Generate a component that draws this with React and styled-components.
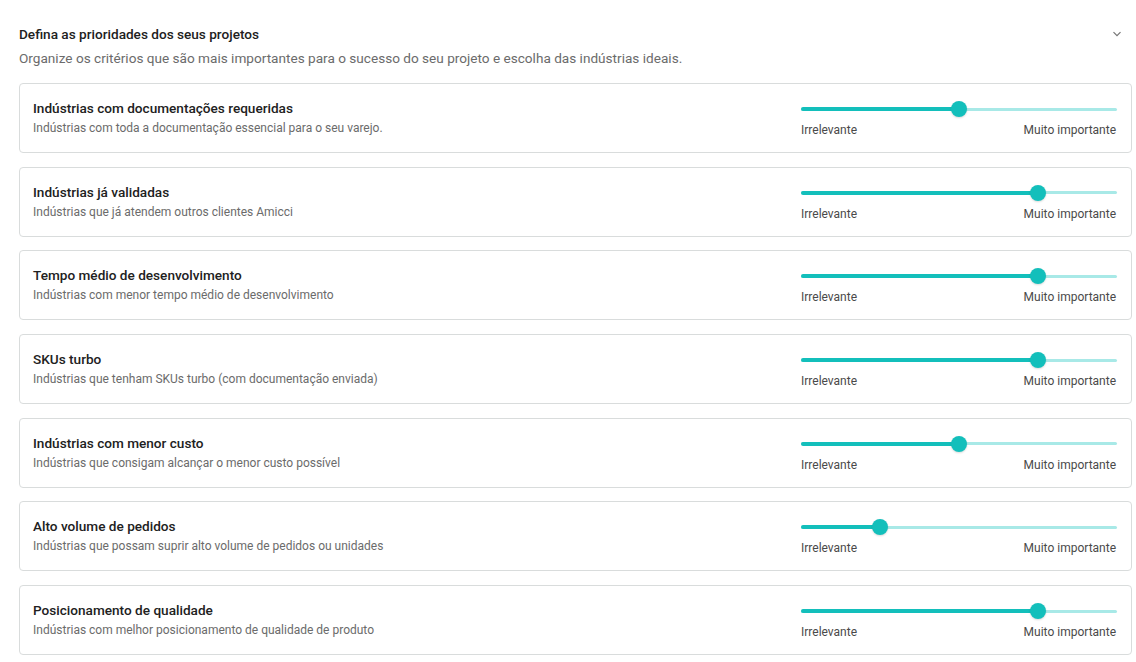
import React from "react";
import styled, { createGlobalStyle } from "styled-components";

const Global = createGlobalStyle`
  html, body { margin: 0; padding: 0; background: #ffffff; }
  body { font-family: Roboto, "Noto Sans", Arial, sans-serif; -webkit-font-smoothing: antialiased; }
  * { box-sizing: border-box; }
`;

const Panel = styled.section`
  width: 1136px;
  min-height: 662px;
  background: #fff;
  box-shadow: 0 -1px 3px rgba(0,0,0,0.08);
  padding: 24px 4px 0 19px;
`;

const HeaderRow = styled.div`
  display: flex;
  align-items: center;
  justify-content: space-between;
  padding-right: 10px;
  height: 20px;
`;

const Heading = styled.h2`
  margin: 0;
  font-size: 13.6px;
  font-weight: 500;
  color: #212121;
  line-height: 20px;
`;

const Chevron = styled.svg`
  width: 10px;
  height: 10px;
  color: #757575;
  margin-top: -1px;
`;

const Subtitle = styled.p`
  margin: 4px 0 15px;
  font-size: 13.6px;
  line-height: 20px;
  color: #6b6b6b;
`;

const List = styled.div`
  display: flex;
  flex-direction: column;
  gap: 13.7px;
`;

const Card = styled.div`
  display: flex;
  align-items: center;
  justify-content: space-between;
  height: 70px;
  border: 1px solid #d9dcdc;
  border-radius: 4px;
  padding: 0 14px 0 13px;
`;

const TextBlock = styled.div`
  display: flex;
  flex-direction: column;
  margin-top: 1px;
`;

const Title = styled.div`
  font-size: 13.6px;
  font-weight: 500;
  color: #212121;
  line-height: 19px;
`;

const Desc = styled.div`
  font-size: 12px;
  color: #6b6b6b;
  line-height: 19px;
  padding-top: 1px;
`;

const SliderBlock = styled.div`
  width: 316px;
  display: flex;
  flex-direction: column;
  gap: 11px;
  margin-top: 9px;
`;

const Rail = styled.div`
  position: relative;
  height: 4px;
  display: flex;
  align-items: center;
`;

const RailLine = styled.div`
  position: absolute;
  left: 0;
  right: 0;
  height: 3px;
  border-radius: 2px;
  background: #a8e9e7;
`;

const Track = styled.div`
  position: absolute;
  left: 0;
  height: 4px;
  border-radius: 2px;
  background: #13bfbb;
`;

const Thumb = styled.div`
  position: absolute;
  top: 50%;
  width: 16px;
  height: 16px;
  margin-left: -8px;
  margin-top: -8px;
  border-radius: 50%;
  background: #13bfbb;
  box-shadow: 0 1px 2px rgba(0,0,0,0.15);
`;

const Labels = styled.div`
  display: flex;
  justify-content: space-between;
  font-size: 12px;
  line-height: 16px;
  color: #4a4a4a;
  padding-right: 1px;
`;

const items = [
  { t: "Indústrias com documentações requeridas", d: "Indústrias com toda a documentação essencial para o seu varejo.", v: 50 },
  { t: "Indústrias já validadas", d: "Indústrias que já atendem outros clientes Amicci", v: 75 },
  { t: "Tempo médio de desenvolvimento", d: "Indústrias com menor tempo médio de desenvolvimento", v: 75 },
  { t: "SKUs turbo", d: "Indústrias que tenham SKUs turbo (com documentação enviada)", v: 75 },
  { t: "Indústrias com menor custo", d: "Indústrias que consigam alcançar o menor custo possível", v: 50 },
  { t: "Alto volume de pedidos", d: "Indústrias que possam suprir alto volume de pedidos ou unidades", v: 25 },
  { t: "Posicionamento de qualidade", d: "Indústrias com melhor posicionamento de qualidade de produto", v: 75 },
];

function Slider({ value }) {
  return (
    <SliderBlock>
      <Rail>
        <RailLine />
        <Track style={{ width: `${value}%` }} />
        <Thumb style={{ left: `${value}%` }} />
      </Rail>
      <Labels>
        <span>Irrelevante</span>
        <span>Muito importante</span>
      </Labels>
    </SliderBlock>
  );
}

export default function App() {
  return (
    <>
      <Global />
      <Panel>
        <HeaderRow>
          <Heading>Defina as prioridades dos seus projetos</Heading>
          <Chevron viewBox="0 0 10 10" fill="none">
            <path d="M1.5 3.2 L5 6.7 L8.5 3.2" stroke="currentColor" strokeWidth="1.2" />
          </Chevron>
        </HeaderRow>
        <Subtitle>
          Organize os critérios que são mais importantes para o sucesso do seu projeto e escolha das indústrias ideais.
        </Subtitle>
        <List>
          {items.map((it) => (
            <Card key={it.t}>
              <TextBlock>
                <Title>{it.t}</Title>
                <Desc>{it.d}</Desc>
              </TextBlock>
              <Slider value={it.v} />
            </Card>
          ))}
        </List>
      </Panel>
    </>
  );
}
